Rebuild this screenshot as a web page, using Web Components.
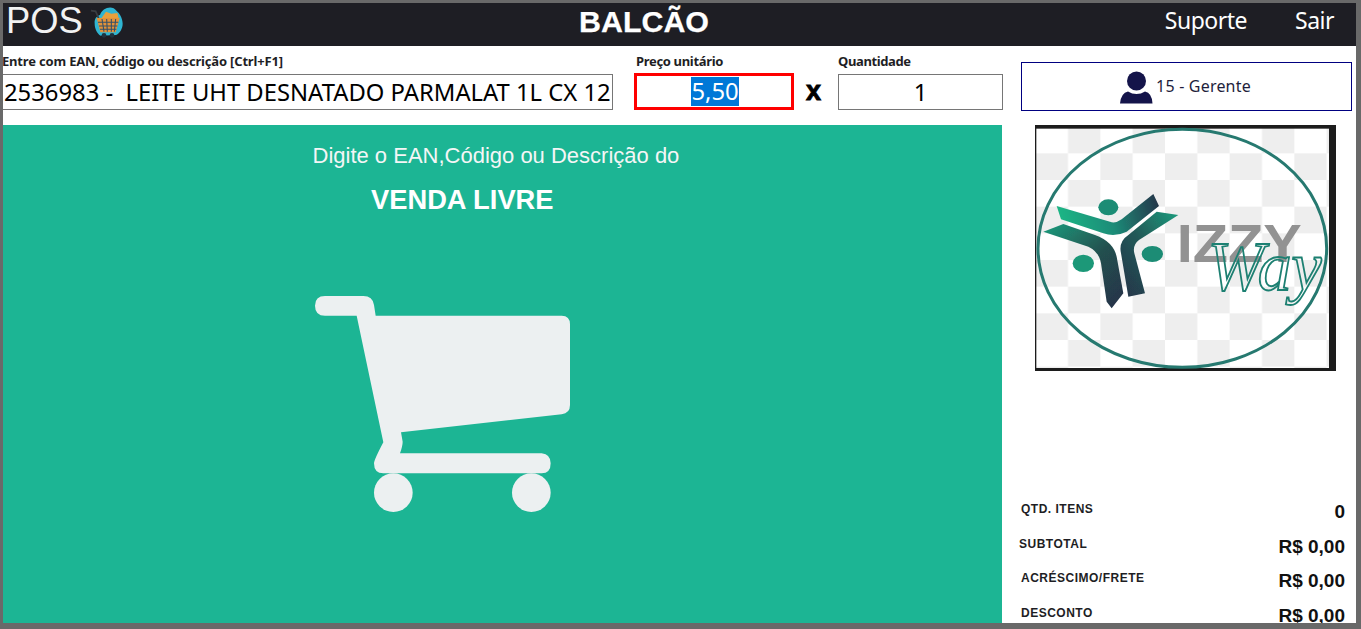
<!DOCTYPE html>
<html lang="pt-BR"><head><meta charset="utf-8"><title>POS Balcão</title>
<style>
html,body{margin:0;padding:0;height:629px;overflow:hidden;background:#696969}
</style></head><body>
<pos-app></pos-app>
<script>
const UI='"Noto Sans","Open Sans",sans-serif', AR='"Liberation Sans",Arial,sans-serif';
function def(name,html,init){customElements.define(name,class extends HTMLElement{connectedCallback(){if(this.shadowRoot)return;const r=this.attachShadow({mode:'open'});r.innerHTML=html;init&&init(r,this);}});}

def('pos-cart-badge',`<style>:host{display:block;width:42px;height:38px}svg{display:block}</style>
<svg width="42" height="38" viewBox="0 0 126 114">
<path d="M26 62C24 46 34 38 42 36C48 16 78 4 92 24C100 30 110 46 110 62C110 78 100 92 90 96L44 98C34 92 26 78 26 62Z" fill="#2fb5d2"/>
<path d="M15 23L29 25L38 46" fill="none" stroke="#3a3d42" stroke-width="5"/>
<path d="M46 46L60 26L76 32L94 30L98 46Z" fill="#e8a03c"/>
<path d="M32 45L101 45L89 88L43 88Z" fill="#e39238"/>
<path d="M36 58H97M39 69H94M42 79H91M48 48L54 86M62 48L64 86M76 48L76 86M89 48L85 86" stroke="#33506a" stroke-width="3.2" fill="none"/>
<circle cx="54" cy="97" r="7" fill="#1f3440"/><circle cx="78" cy="97" r="7" fill="#1f3440"/>
</svg>`);

def('pos-header',`<style>
:host{display:grid;grid-template-columns:576px auto 1fr;align-items:center;height:43px;background:#1e1e24;color:#fff;overflow:hidden}
.l{display:flex;align-items:flex-start;gap:3.5px;padding-left:3px;height:43px}
.pos{font:36.3px/42px ${AR};color:#f2f2f2;margin-top:-4px}
.t{font:bold 30.4px/37px ${AR};padding:0 0 8px 0;-webkit-text-stroke:.25px #fff}
nav{display:flex;justify-content:flex-end;gap:48px;padding-right:22px;font:23px/32px ${UI};padding-bottom:11px;letter-spacing:-.5px}
pos-cart-badge{margin-top:-1px}
</style><div class="l"><span class="pos">POS</span><pos-cart-badge></pos-cart-badge></div><div class="t">BALCÃO</div><nav><span>Suporte</span><span>Sair</span></nav>`);

def('pos-field',`<style>
:host{display:block;color:#1e1e24}
label{display:block;font:bold 13px/16px ${UI};height:21px;padding-top:7px;padding-left:var(--ll,0);letter-spacing:var(--ls,-.18px);white-space:nowrap}
.b{box-sizing:border-box;height:36px;border:1px solid #767676;background:#fff;display:flex;align-items:center;justify-content:var(--j,center);color:#000;font:23.8px/30px ${UI};white-space:pre;padding-left:var(--pl,0)}
:host([focused]) .b{border:3px solid #f00;height:37px;margin-top:-1px}
mark{background:#0078d7;color:#fff;padding:0;display:block;line-height:29px;margin-left:2px}
</style><label></label><div class="b"></div>`,(r,h)=>{r.querySelector('label').textContent=h.getAttribute('label');const b=r.querySelector('.b');const v=h.getAttribute('value');if(h.hasAttribute('focused')){const m=document.createElement('mark');m.textContent=v;b.append(m)}else b.textContent=v;});

def('pos-form',`<style>
:host{display:flex;height:79px;margin-left:-1px;width:1001px;position:relative;z-index:1}
.f1{width:611px;--j:flex-start;--pl:1px}
.f2{width:160px;margin-left:21px;--ll:2px;--ls:-.33px}
.f3{width:165px;--ls:-.38px}
.x{width:44px;padding-right:5px;text-align:center;font:900 27px/36px ${AR};-webkit-text-stroke:.9px #000;padding-top:27px;box-sizing:border-box;color:#000}
</style>
<pos-field class="f1" label="Entre com EAN, código ou descrição [Ctrl+F1]" value="2536983 -  LEITE UHT DESNATADO PARMALAT 1L CX 12"></pos-field>
<pos-field class="f2" label="Preço unitário" value="5,50" focused></pos-field>
<div class="x">x</div>
<pos-field class="f3" label="Quantidade" value="1"></pos-field>`);

def('pos-empty',`<style>
:host{display:flex;flex-direction:column;flex:1;background:#1cb594;color:#fff;min-height:0}
.a{font:22px/24px ${AR};margin:19px 0 0 309.5px;color:#f4f6f6}
.b{font:bold 27.3px/32px ${AR};margin:16px 0 0 368px}
svg{display:block;margin:69px 0 0 297px}
</style>
<div class="a">Digite o EAN,Código ou Descrição do</div>
<div class="b">VENDA LIVRE</div>
<svg width="290" height="240" viewBox="0 0 870 720"><path fill="#ecf0f1" d="M75 33L190 33Q218 33 222 60L227 92L785 92Q810 92 810 118L810 360Q810 385 785 388L303 442L308 470Q308 482 300 505L725 505Q752 508 752 535Q752 565 725 565L250 565Q222 565 222 535Q222 525 250 472L170 92L75 92Q45 92 45 62Q45 33 75 33Z"/><circle cx="280" cy="623" r="58" fill="#ecf0f1"/><circle cx="694" cy="623" r="58" fill="#ecf0f1"/></svg>`);

def('pos-user',`<style>
:host{display:flex;align-items:center;justify-content:center;gap:3px;box-sizing:border-box;width:331px;height:49px;border:1px solid #000080;background:#fff;color:#1e1e3c;font:16px/20px ${UI};letter-spacing:.2px}
svg{display:block;margin-left:-2px;margin-top:1px}
span{margin-top:-2px}
</style><svg width="33" height="33" viewBox="0 0 33 33"><circle cx="16.5" cy="10" r="9.5" fill="#14144a"/><path d="M0 32.5Q1 22 8 20.5Q12 23 16.5 23Q21 23 25 20.5Q32 22 32.5 32.5Z" fill="#14144a"/></svg><span>15 - Gerente</span>`);

def('pos-logo',`<style>
:host{display:block;width:301px;height:246px}svg{display:block}
</style><svg width="301" height="246" viewBox="30 15 903 738">
<defs>
<pattern id="c" x="32" y="20" width="194" height="160" patternUnits="userSpaceOnUse"><rect width="194" height="160" fill="#fff"/><rect x="97" width="97" height="80" fill="#eee"/><rect y="80" width="97" height="80" fill="#eee"/></pattern>
<linearGradient id="g1" x1="0" x2="1" y1=".3" y2=".2"><stop offset="0" stop-color="#1fb585"/><stop offset=".5" stop-color="#1d8c78"/><stop offset="1" stop-color="#25364a"/></linearGradient>
<linearGradient id="g2" x1="0" x2=".8" y1="0" y2="1"><stop offset="0" stop-color="#1c9c7d"/><stop offset=".55" stop-color="#24504f"/><stop offset="1" stop-color="#25364a"/></linearGradient>
<linearGradient id="g3" x1="1" x2=".1" y1="0" y2="1"><stop offset="0" stop-color="#1c9c7d"/><stop offset=".5" stop-color="#235a58"/><stop offset="1" stop-color="#25364a"/></linearGradient>
<filter id="s" x="-5%" y="-5%" width="110%" height="110%"><feGaussianBlur stdDeviation="1.6"/></filter>
</defs>
<rect x="30" y="15" width="903" height="738" fill="#1c1c1c"/>
<rect x="34" y="26" width="878" height="718" fill="url(#c)"/>
<g filter="url(#s)">
<ellipse cx="472" cy="385" rx="433" ry="357" fill="none" stroke="#25796f" stroke-width="9"/>
<path fill="url(#g1)" d="M95 258L255 305Q270 312 290 298L385 222L402 258L305 335Q270 352 235 340L108 298Z"/>
<path fill="url(#g2)" d="M55 335L115 312L210 345Q265 365 275 410L295 520L260 565L245 545L228 430Q222 395 190 380Z"/>
<path fill="url(#g3)" d="M460 285L395 275L310 345Q280 365 288 400L310 530L360 520L328 400Q322 375 342 360Z"/>
<ellipse cx="250" cy="262" rx="30" ry="24" fill="#1a8c74"/><ellipse cx="175" cy="430" rx="32" ry="26" fill="#1a9878"/><ellipse cx="382" cy="402" rx="32" ry="24" fill="#1a8c74"/>
<text x="455" y="425" font-family="Liberation Sans" font-weight="bold" font-size="160" fill="#929292" textLength="375" lengthAdjust="spacingAndGlyphs">IZZY</text>
<text x="548" y="510" font-family="Liberation Serif" font-style="italic" font-size="210" fill="none" stroke="#1f8072" stroke-width="5.5" textLength="342" lengthAdjust="spacingAndGlyphs">Way</text>
</g></svg>`);

def('pos-total',`<style>
:host{display:flex;align-items:flex-start;justify-content:space-between;height:34.6px;color:#1e1e24;padding-right:11px}
.l{font:bold 12px/14px ${AR};padding-top:1px;margin-left:var(--ml,0);letter-spacing:.5px}
.v{font:bold 19px/21px ${AR};color:#111}
</style><span class="l"></span><span class="v"></span>`,(r,h)=>{r.querySelector('.l').textContent=h.getAttribute('label');r.querySelector('.v').textContent=h.getAttribute('value');});

def('pos-side',`<style>
:host{display:flex;flex-direction:column;min-height:0;overflow:hidden;padding-left:19px}
pos-user{margin-top:16px}
pos-logo{margin:14px 0 0 14px}
.t{margin-top:auto;height:122px;flex:none}
</style><pos-user></pos-user><pos-logo></pos-logo><div class="t">
<pos-total label="QTD. ITENS" value="0"></pos-total>
<pos-total label="SUBTOTAL" value="R$ 0,00" style="--ml:-2px"></pos-total>
<pos-total label="ACRÉSCIMO/FRETE" value="R$ 0,00"></pos-total>
<pos-total label="DESCONTO" value="R$ 0,00"></pos-total></div>`);

def('pos-app',`<style>
:host{display:grid;grid-template-rows:43px 1fr;box-sizing:border-box;width:1353px;height:620px;margin:3px 5px 6px 3px;background:#fff;overflow:hidden}
main{display:grid;grid-template-columns:999px 354px;min-height:0}
.left{display:flex;flex-direction:column;min-height:0;min-width:0}
</style><pos-header></pos-header><main><div class="left"><pos-form></pos-form><pos-empty></pos-empty></div><pos-side></pos-side></main>`);
</script>
</body></html>
